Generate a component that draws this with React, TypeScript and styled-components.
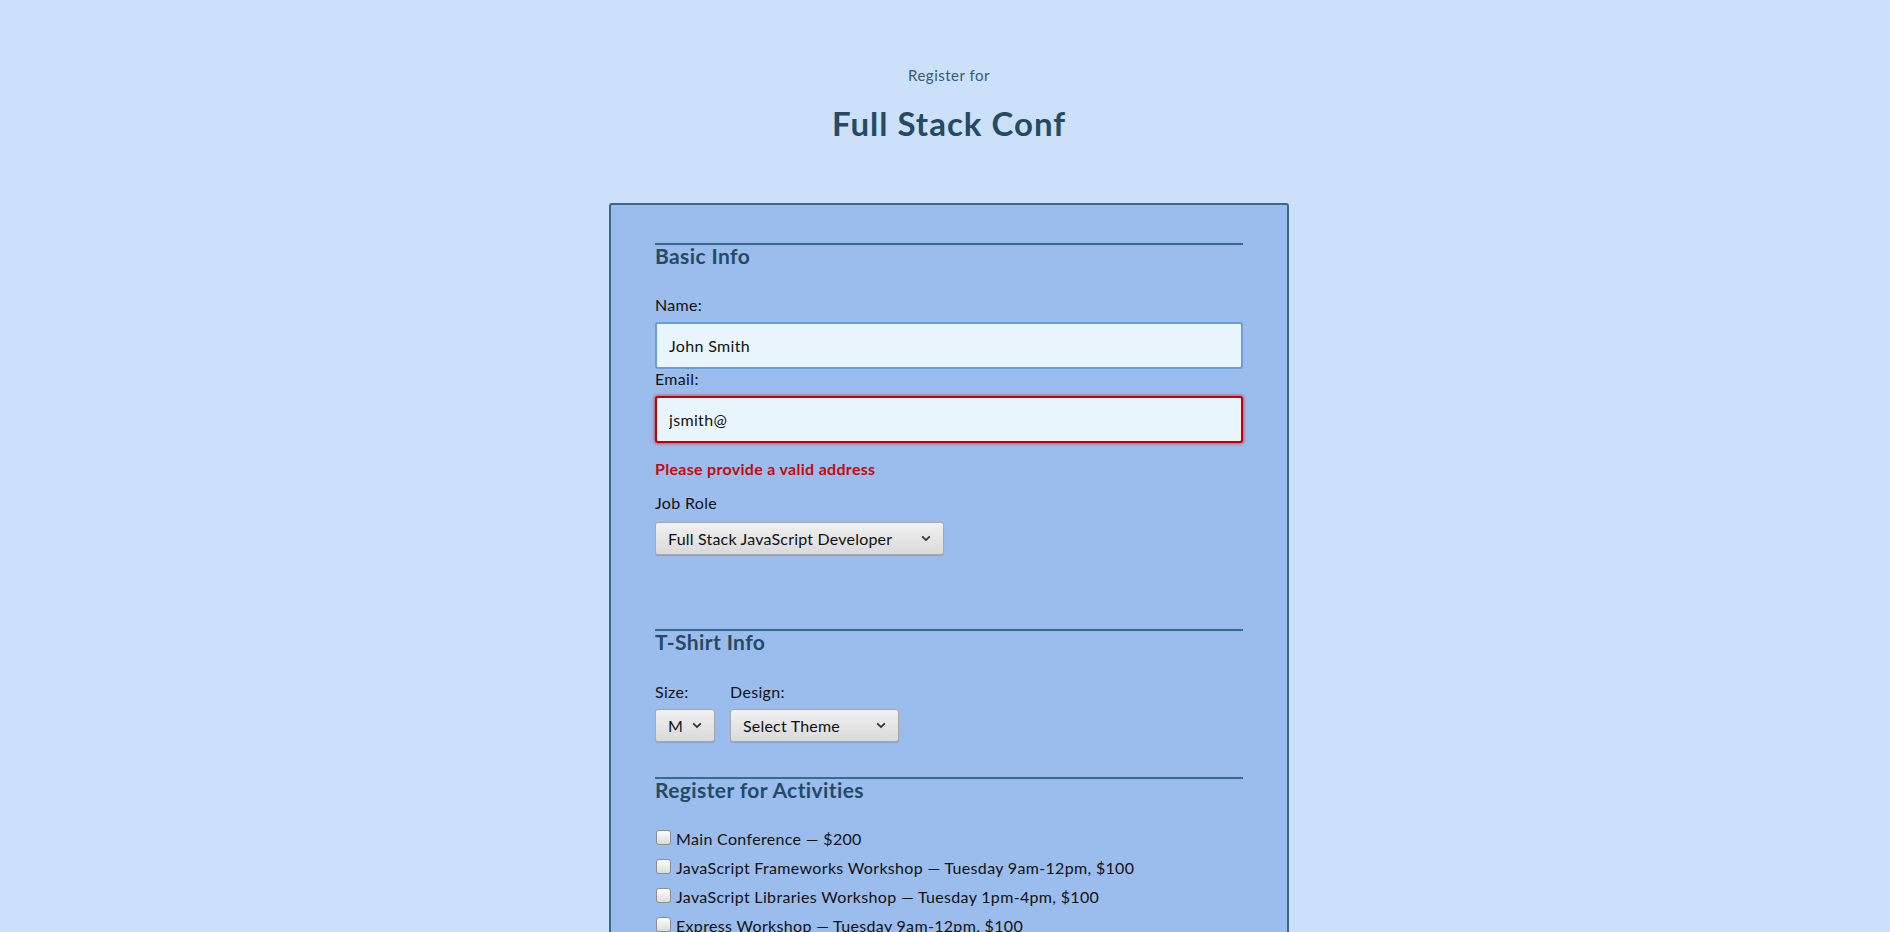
import React from "react";
import styled, { createGlobalStyle } from "styled-components";

const GlobalStyle = createGlobalStyle`
  html {
    overflow: hidden;
  }
  body {
    margin: 0;
    background: #cce0fa;
    font-family: Lato, "Open Sans", sans-serif;
    letter-spacing: 0.33px;
    color: #111;
  }
`;

const Page = styled.div`
  padding-left: 8px;
  min-height: 932px;
`;

const Header = styled.header`
  text-align: center;
  padding-top: 65px;
`;

const SubTitle = styled.p`
  margin: 0;
  font-size: 15px;
  line-height: 20px;
  letter-spacing: 0.5px;
  color: #355a78;
`;

const Title = styled.h1`
  margin: 18px 0 0;
  font-size: 33px;
  line-height: 40px;
  font-weight: 700;
  letter-spacing: 1px;
  color: #254a62;
`;

const Form = styled.form`
  width: 588px;
  margin: 60px auto 0;
  padding: 38px 44px 40px;
  background: #9bbded;
  border: 2px solid #386a8e;
  border-radius: 3px;
`;

const Section = styled.fieldset<{ $gap?: number }>`
  border: 0;
  margin: 0;
  padding: 0;
  margin-bottom: ${props => props.$gap || 0}px;
`;

const Legend = styled.div<{ $after: number }>`
  border-top: 2px solid #386a8e;
  font-size: 21px;
  line-height: 20px;
  padding-top: 1px;
  font-weight: 700;
  letter-spacing: 0.4px;
  color: #254a62;
  margin-bottom: ${props => props.$after}px;
`;

const Label = styled.label<{ $after?: number }>`
  display: block;
  font-size: 16px;
  line-height: 20px;
  margin-bottom: ${props => props.$after ?? 7}px;
`;

const TextInput = styled.input<{ $invalid?: boolean }>`
  display: block;
  box-sizing: border-box;
  width: 100%;
  height: 47px;
  margin: 0;
  padding: 0 12px;
  font-family: inherit;
  font-size: 16px;
  letter-spacing: 0.33px;
  color: #111;
  background: #e8f5fc;
  border: 2px solid ${props => (props.$invalid ? "#c40000" : "#6b9ddc")};
  border-radius: 3px;
  box-shadow: ${props => (props.$invalid ? "0 0 3px 1px rgba(200, 0, 0, 0.5)" : "none")};
  outline: none;
`;

const ErrorText = styled.p`
  margin: 16px 0 14px;
  font-size: 16px;
  line-height: 20px;
  font-weight: 700;
  letter-spacing: 0.3px;
  color: #c50a0a;
`;

const SelectWrap = styled.div<{ $width: number }>`
  position: relative;
  width: ${props => props.$width}px;
`;

const Select = styled.select`
  appearance: none;
  display: block;
  box-sizing: border-box;
  width: 100%;
  height: 33px;
  margin: 0;
  padding: 0 28px 0 12px;
  font-family: inherit;
  font-size: 16px;
  letter-spacing: 0.2px;
  color: #111;
  background: linear-gradient(#f1f1f1, #dadada);
  border: 1px solid #a8a8a8;
  border-radius: 3px;
  box-shadow: 0 1px 1px rgba(0, 0, 0, 0.15);
`;

const Chevron = styled.svg`
  position: absolute;
  right: 13px;
  top: 13px;
  pointer-events: none;
`;

const ShirtRow = styled.div`
  display: flex;
  gap: 15px;
`;

const Field = styled.div``;

const Activity = styled.label`
  display: flex;
  align-items: center;
  height: 29px;
  font-size: 16px;
`;

const Box = styled.input`
  appearance: none;
  box-sizing: border-box;
  width: 15px;
  height: 15px;
  margin: -3px 5px 0 1px;
  background: linear-gradient(#fdfdfd, #dcdcdc);
  border: 1px solid #8e8e8e;
  border-radius: 3px;
`;

function Arrow() {
  return (
    <Chevron width="10" height="7" viewBox="0 0 10 7">
      <path d="M1.2 1.3l3.8 3.8 3.8-3.8" fill="none" stroke="#333" strokeWidth="1.8" />
    </Chevron>
  );
}

const activities = [
  "Main Conference — $200",
  "JavaScript Frameworks Workshop — Tuesday 9am-12pm, $100",
  "JavaScript Libraries Workshop — Tuesday 1pm-4pm, $100",
  "Express Workshop — Tuesday 9am-12pm, $100",
  "Node.js Workshop — Tuesday 1pm-4pm, $100",
  "Build tools Workshop — Wednesday 9am-12pm, $100",
  "npm Workshop — Wednesday 1pm-4pm, $100",
];

export default function App() {
  return (
    <Page>
      <GlobalStyle />
      <Header>
        <SubTitle>Register for</SubTitle>
        <Title>Full Stack Conf</Title>
      </Header>
      <Form onSubmit={e => e.preventDefault()}>
        <Section $gap={74}>
          <Legend $after={29}>Basic Info</Legend>
          <Label htmlFor="name">Name:</Label>
          <TextInput id="name" type="text" defaultValue="John Smith" />
          <Label htmlFor="mail">Email:</Label>
          <TextInput id="mail" type="text" defaultValue="jsmith@" $invalid />
          <ErrorText>Please provide a valid address</ErrorText>
          <Label htmlFor="title" $after={9}>Job Role</Label>
          <SelectWrap $width={289}>
            <Select id="title" defaultValue="full-stack">
              <option value="full-stack">Full Stack JavaScript Developer</option>
              <option value="front-end">Front End Developer</option>
              <option value="back-end">Back End Developer</option>
            </Select>
            <Arrow />
          </SelectWrap>
        </Section>

        <Section $gap={35}>
          <Legend $after={30}>T-Shirt Info</Legend>
          <ShirtRow>
            <Field>
              <Label htmlFor="size">Size:</Label>
              <SelectWrap $width={60}>
                <Select id="size" defaultValue="m">
                  <option value="s">S</option>
                  <option value="m">M</option>
                  <option value="l">L</option>
                </Select>
                <Arrow />
              </SelectWrap>
            </Field>
            <Field>
              <Label htmlFor="design">Design:</Label>
              <SelectWrap $width={169}>
                <Select id="design" defaultValue="none">
                  <option value="none">Select Theme</option>
                  <option value="js puns">Theme - JS Puns</option>
                  <option value="heart js">Theme - I ♥ JS</option>
                </Select>
                <Arrow />
              </SelectWrap>
            </Field>
          </ShirtRow>
        </Section>

        <Section>
          <Legend $after={24}>Register for Activities</Legend>
          {activities.map(a => (
            <Activity key={a}>
              <Box type="checkbox" />
              {a}
            </Activity>
          ))}
        </Section>
      </Form>
    </Page>
  );
}
